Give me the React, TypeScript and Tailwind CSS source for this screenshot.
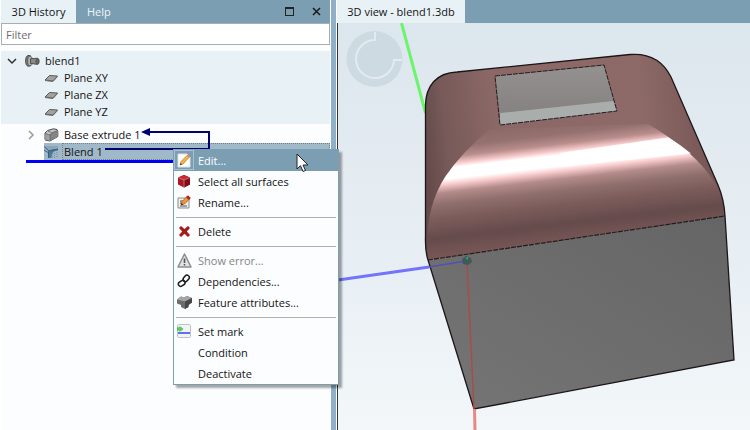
import React from "react";
import clsx from "clsx";

interface MenuEntry {
  label: string;
  icon?: React.ReactNode;
  active?: boolean;
  disabled?: boolean;
}

function PartIcon() {
  return (
    <svg width="15" height="14" viewBox="0 0 15 14">
      <path d="M3 1.500C1.200 2 .6 4.500 .6 7s.8 4.800 2.400 5.200l2.500-.4V1.800z" fill="#808080" stroke="#3c3c3c" strokeWidth=".9" />
      <ellipse cx="5" cy="7" rx="2.300" ry="4.900" fill="#b4b4b4" stroke="#4c4c4c" strokeWidth=".8" />
      <path d="M5.500 4.800L12.300 4.200c1.300 0 1.800 1.400 1.800 3s-.5 3.200-1.800 3.200l-6.800-1z" fill="#8a8a8a" stroke="#3c3c3c" strokeWidth=".8" />
      <ellipse cx="12.200" cy="7.300" rx="1.400" ry="2.700" fill="#6a6a6a" stroke="#3c3c3c" strokeWidth=".5" />
    </svg>
  );
}

function PlaneIcon() {
  return (
    <svg width="15" height="14" viewBox="0 0 15 14">
      <path d="M1 9L5.500 4.500L13.500 5L9 10z" fill="#a2a2a2" stroke="#5c5c5c" strokeLinejoin="round" />
      <path d="M1 9.500L9 10.500L13.500 5.500" fill="none" stroke="#6c6c6c" />
    </svg>
  );
}

function ExtrudeIcon() {
  return (
    <svg width="15" height="14" viewBox="0 0 15 14">
      <path d="M1 5L3.500 2.500 9.500.8l3.500.7.8 2V8.500L6 13l-4.500-.8L1 11z" fill="#c4c4c4" stroke="#4a4a4a" strokeLinejoin="round" />
      <path d="M6.200 7l1.300-2L13.800 2.500v6L6.200 13z" fill="#858585" />
      <path d="M1.500 5.500L6 7v5.500L1.500 12z" fill="#a0a0a0" />
      <path d="M1.500 5.500L6 7M6.200 12.500V7l1.300-2 6-2.500M4 3l3.500 1.500" fill="none" stroke="#555" strokeWidth=".7" />
    </svg>
  );
}

function BlendIcon() {
  return (
    <svg width="15" height="14" viewBox="0 0 15 14">
      <path d="M0 1h14v4L9 6v7H4V6z" fill="#8ba6b7" />
      <path d="M4 7c1.500-2 4-3 10-3v1.500c-4 .3-6.500 2-6.500 7.500H4.500z" fill="#56788f" />
      <path d="M0 1.500l5 4.500M0 5l4 2.500M5 6l9-2M4.500 6.500V13" stroke="#2f5f8f" fill="none" />
      <path d="M10.500 8v5M13 7v6" stroke="#70899a" strokeDasharray="1 1" />
    </svg>
  );
}

function EditIcon() {
  return (
    <svg width="14" height="15" viewBox="0 0 14 15">
      <path d="M1 1h9l3 3v10H1z" fill="#fff" stroke="#dce2e5" />
      <path d="M3 12l1-3.500L10.500 2l2 2L6 11z" fill="#f0b445" stroke="#b77a2d" strokeWidth=".7" />
      <path d="M10 2.500l1-1 2 2-1 1z" fill="#e47a80" />
      <path d="M3 12l.5-2 1.500 1.500z" fill="#333" />
    </svg>
  );
}

function SurfacesIcon() {
  return (
    <svg width="14" height="14" viewBox="0 0 14 14">
      <path d="M1 3.500L7 1l6 2.500V10.500L7 13.500 1 10.500z" fill="#a61822" />
      <path d="M1 3.500L7 1l6 2.500L7 6z" fill="#c42b34" />
      <path d="M7 6l6-2.500V10.500L7 13.500z" fill="#820d16" />
      <path d="M1 3.500L7 6l6-2.500M7 6v7.500" fill="none" stroke="#e58b8f" strokeWidth=".7" />
    </svg>
  );
}

function RenameIcon() {
  return (
    <svg width="15" height="14" viewBox="0 0 15 14">
      <path d="M1 3h11v10H1z" fill="#eee" stroke="#8a8a8a" />
      <path d="M3 6h3M3 8h2M3 11h7" stroke="#555" />
      <path d="M4 10l1-3.500L10 1.500l2.500 2.500L7.500 9z" fill="#ed9a33" stroke="#98501e" strokeWidth=".7" />
      <path d="M9 2.300L11 .3 13.800 3l-2 2z" fill="#b52226" />
      <path d="M4 10l.6-2L6 9.400z" fill="#222" />
    </svg>
  );
}

function DeleteIcon() {
  return (
    <svg width="13" height="13" viewBox="0 0 13 13">
      <path d="M1 3l2-2 3.500 3L10 1l2 2-3.200 3.500L12 10l-2 2-3.500-3.200L3 12l-2-2 3.200-3.500z" fill="#a31b1b" />
    </svg>
  );
}

function ErrorIcon() {
  return (
    <svg width="15" height="15" viewBox="0 0 15 15">
      <path d="M7.500 1l6.500 13H1z" fill="#e2e2e2" stroke="#8d8d8d" strokeWidth="1.500" strokeLinejoin="round" />
      <path d="M7.500 5.500V10M7.500 11v1.500" stroke="#555" strokeWidth="1.600" />
    </svg>
  );
}

function LinkIcon() {
  return (
    <svg width="14" height="14" viewBox="0 0 14 14" fill="none" stroke="#1c1c1c" strokeWidth="1.500">
      <rect x="-3.500" y="-2.300" width="7" height="4.600" rx="2.300" transform="translate(9.200 4.400) rotate(-50)" />
      <rect x="-3.500" y="-2.300" width="7" height="4.600" rx="2.300" transform="translate(4.700 9.400) rotate(-35)" />
    </svg>
  );
}

function AttributesIcon() {
  return (
    <svg width="15" height="14" viewBox="0 0 15 14">
      <path d="M0 4.500L4 1.500l3 1L10 1l5 2v4.500L11.500 10v2L8 14l-4-2v-2L0 8.500z" fill="#6c6c6c" />
      <path d="M0 4.500L4 1.500l3 1L10 1l5 2L8 6.500z" fill="#a4a4a4" />
      <path d="M8 6.500L15 3v4.500L11.500 10v2L8 14z" fill="#484848" />
    </svg>
  );
}

function MarkIcon() {
  return (
    <svg width="14" height="14" viewBox="0 0 14 14">
      <rect x=".5" y=".5" width="13" height="13" rx="1" fill="#f1f3f5" stroke="#bcc3c8" />
      <path d="M1 9h12" stroke="#3347e8" strokeWidth="1.500" />
      <path d="M0 3.500h2.500V2L6.500 5 2.500 8V6.500H0z" fill="#4bb84b" />
      <circle cx="3" cy="5" r="2" fill="#5fcf5a" />
    </svg>
  );
}

function Chevron({ open }: { open?: boolean }) {
  return (
    <svg width="10" height="10" viewBox="0 0 10 10" fill="none" strokeWidth="1.500">
      {open ? <path d="M1 3l4 4 4-4" stroke="#333" /> : <path d="M3 1l4 4-4 4" stroke="#999" />}
    </svg>
  );
}

const menuGroups: MenuEntry[][] = [
  [
    { label: "Edit...", icon: <EditIcon />, active: true },
    { label: "Select all surfaces", icon: <SurfacesIcon /> },
    { label: "Rename...", icon: <RenameIcon /> },
  ],
  [{ label: "Delete", icon: <DeleteIcon /> }],
  [
    { label: "Show error...", icon: <ErrorIcon />, disabled: true },
    { label: "Dependencies...", icon: <LinkIcon /> },
    { label: "Feature attributes...", icon: <AttributesIcon /> },
  ],
  [
    { label: "Set mark", icon: <MarkIcon /> },
    { label: "Condition" },
    { label: "Deactivate" },
  ],
];

function ContextMenu() {
  return (
    <div
      role="menu"
      className="absolute top-[149px] left-[173px] z-10 w-[166px] border border-[#7c9eb3] bg-[#fbfdfe] shadow-[3px_3px_2px_rgba(0,0,0,0.35)]"
    >
      {menuGroups.map((group, i) => (
        <React.Fragment key={i}>
          {i > 0 && (
            <div role="separator" className="flex h-2 items-center px-[2px]">
              <div className="h-px flex-1 bg-[#b0b0b0]" />
            </div>
          )}
          {group.map((item) => (
            <button
              key={item.label}
              role="menuitem"
              disabled={item.disabled}
              className={clsx(
                "flex h-[21px] w-full items-center gap-1 pb-px text-left",
                item.active && "bg-[#7c9eb3] text-white",
                item.disabled && "text-[#858585]"
              )}
            >
              <span
                className={clsx(
                  "flex h-full w-5 items-center justify-center border",
                  item.active ? "border-[#a9c1cf]" : "border-transparent"
                )}
              >
                {item.icon}
              </span>
              {item.label}
            </button>
          ))}
        </React.Fragment>
      ))}
      <svg className="absolute top-[3px] left-[122px]" width="13" height="20" viewBox="0 0 13 20">
        <path d="M1 1v15l3.500-3.300L7 18.500l2.500-1L7 12h5z" fill="#fff" stroke="#222" />
      </svg>
    </div>
  );
}

function HistoryPanel() {
  return (
    <section className="flex w-[44%] flex-none flex-col border-l border-white bg-[#fcfdfe]">
      <header className="flex h-[23px] items-stretch bg-[#7c9eb3]">
        <button className="w-[75px] bg-[#e8f1f6]">3D History</button>
        <button className="px-[11px] text-[#eef5f9]">Help</button>
        <div className="ml-auto flex items-center gap-[18px] pr-[9px]">
          <button aria-label="Maximize" className="block size-[9px] border border-t-2 border-[#222]" />
          <button aria-label="Close">
            <svg width="9" height="9" viewBox="0 0 9 9">
              <path d="M1 1l7 7M8 1L1 8" stroke="#1a1a1a" strokeWidth="1.500" />
            </svg>
          </button>
        </div>
      </header>
      <input
        aria-label="Filter"
        placeholder="Filter"
        className="h-[22px] w-full border border-[#a8adb0] bg-white px-1 placeholder:text-[#6e6e6e]"
      />
      <ul className="mt-[6px] bg-[#e8f1f6] pt-px pb-1">
        <li className="flex h-[17px] items-center pl-[6px]">
          <Chevron open />
          <span className="ml-2">
            <PartIcon />
          </span>
          <span className="ml-[5px]">blend1</span>
        </li>
        {["Plane XY", "Plane ZX", "Plane YZ"].map((plane) => (
          <li key={plane} className="flex h-[17px] items-center gap-[5px] pl-[43px]">
            <PlaneIcon />
            {plane}
          </li>
        ))}
      </ul>
      <ul className="relative pt-[2px]">
        <li className="flex h-[17px] items-center pl-[25px]">
          <Chevron />
          <span className="ml-2">
            <ExtrudeIcon />
          </span>
          <span className="ml-[5px]">Base extrude 1</span>
        </li>
        <li className="flex h-[17px] pl-[43px]">
          <div className="flex flex-1 items-center gap-[3px] bg-[#a0b9c8]">
            <BlendIcon />
            <span className="flex h-full flex-1 items-center border border-dotted border-[#75828a] pl-px">Blend 1</span>
          </div>
        </li>
        <li className="ml-[25px] h-[3px] bg-[#0000f5]" />
        <svg className="absolute top-0 left-[100px]" width="115" height="30" viewBox="101 124 115 30">
          <path d="M105 149H209V132H149" fill="none" stroke="#00006e" strokeWidth="2" />
          <path d="M141 132l9-4v8z" fill="#00006e" />
        </svg>
      </ul>
    </section>
  );
}

function ModelView() {
  return (
    <svg
      className="min-h-0 w-full flex-1"
      viewBox="338 23 412 407"
      preserveAspectRatio="xMinYMin slice"
      aria-label="3D model"
    >
      <defs>
        <linearGradient id="sky" x1="0" y1="0" x2="0" y2="1">
          <stop offset="0" stopColor="#dce6ed" />
          <stop offset=".6" stopColor="#e8eff4" />
          <stop offset="1" stopColor="#f3f7fa" />
        </linearGradient>
        <linearGradient id="shell" gradientUnits="userSpaceOnUse" x1="425" y1="160" x2="718" y2="130">
          <stop offset="0" stopColor="#644a4a" />
          <stop offset=".08" stopColor="#775a59" />
          <stop offset=".25" stopColor="#8b6866" />
          <stop offset=".75" stopColor="#8d6a68" />
          <stop offset="1" stopColor="#735453" />
        </linearGradient>
        <linearGradient id="blend" gradientUnits="userSpaceOnUse" x1="557" y1="120" x2="571" y2="240">
          <stop offset="0" stopColor="#8b6866" />
          <stop offset=".12" stopColor="#957270" />
          <stop offset=".2" stopColor="#b98e8c" />
          <stop offset=".26" stopColor="#fbcfcf" />
          <stop offset=".29" stopColor="#fff" />
          <stop offset=".38" stopColor="#fff" />
          <stop offset=".42" stopColor="#fbcfcf" />
          <stop offset=".49" stopColor="#b38b8a" />
          <stop offset=".58" stopColor="#90706e" />
          <stop offset=".7" stopColor="#7c5c5b" />
          <stop offset=".86" stopColor="#654b4b" />
          <stop offset="1" stopColor="#765655" />
        </linearGradient>
        <linearGradient id="front" x1="0" y1="1" x2="1" y2="0">
          <stop offset="0" stopColor="#757575" />
          <stop offset="1" stopColor="#656565" />
        </linearGradient>
        <linearGradient id="topFace" x1="0" y1="0" x2="0" y2="1">
          <stop offset="0" stopColor="#959190" />
          <stop offset="1" stopColor="#827e7d" />
        </linearGradient>
      </defs>
      <rect x="338" y="23" width="2000" height="407" fill="url(#sky)" />

      {/* view rotation handle */}
      <circle cx="374.500" cy="59" r="28" fill="#cedae2" />
      <path d="M375 32v8a19 19 0 1 0 19 20h8" fill="none" stroke="#e3ebf0" strokeWidth="2" />

      <path d="M401.500 23L425.500 113" stroke="#6cf56c" strokeWidth="3" />
      <path d="M338 280L429 267" stroke="#7373fb" strokeWidth="3" />

      {/* body */}
      <path
        d="M425.500 105C426 86 436 73 457 72L630 54.500C649 53 663 61 671 77L718 185Q724 199 725 216L428 260Q425 251 425.500 236z"
        fill="url(#shell)"
      />
      <path
        d="M428 260Q423 212 445 177Q462 152 490 129L648 124Q694 151 713 180Q724 198 725 216z"
        fill="url(#blend)"
      />
      <path d="M560 153L668 137.500Q681 145 691 153.500L560 167z" fill="#fff" />
      <path d="M428 260L725 216L734 360L474 409z" fill="url(#front)" />
      <path
        d="M428 260Q425 251 425.500 236V105C426 86 436 73 457 72L630 54.500C649 53 663 61 671 77L718 185Q724 199 725 216L734 360L474 409L428 260"
        fill="none"
        stroke="#1c1618"
        strokeWidth="1.300"
      />
      <path d="M428 260L725 216" stroke="#241c1c" strokeWidth="1.200" strokeDasharray="5 1" />

      <path d="M495 76L604 65L617 111L500 125z" fill="url(#topFace)" />
      <path d="M500 113L613.500 101L617 111L500 125z" fill="#a9adac" />
      <path d="M495 76L604 65L617 111L500 125z" fill="none" stroke="#221c1c" strokeDasharray="5 1" />

      {/* origin and axes in front of the body */}
      <path d="M429 267L466 261" stroke="#5050b4" strokeWidth="1.300" />
      <path d="M467 262L474 409" stroke="#a94b4b" strokeWidth="1.500" />
      <path d="M474.500 409L475 430" stroke="#e58a85" strokeWidth="3" />
      <path d="M462 259l4-3 5 2 1 4-4 3-5-1z" fill="#3f5858" />
      <path d="M465 258l3-1v3z" fill="#38a368" />
    </svg>
  );
}

function App() {
  return (
    <main className="relative flex h-screen overflow-hidden bg-white font-['Open_Sans','Noto_Sans',sans-serif] text-[11px] leading-[17px] text-[#141414]">
      <HistoryPanel />
      <div className="mx-px w-[5px] flex-none bg-[#8fb0c6]" />
      <section className="flex min-w-0 flex-1 flex-col">
        <header className="flex h-[23px] flex-none bg-[#7c9eb3]">
          <button className="w-32 bg-[#e8f1f6]">3D view - blend1.3db</button>
        </header>
        <div className="flex min-h-0 flex-1 border-l border-[#33363c]">
          <ModelView />
        </div>
      </section>
      <ContextMenu />
    </main>
  );
}

export default App;
